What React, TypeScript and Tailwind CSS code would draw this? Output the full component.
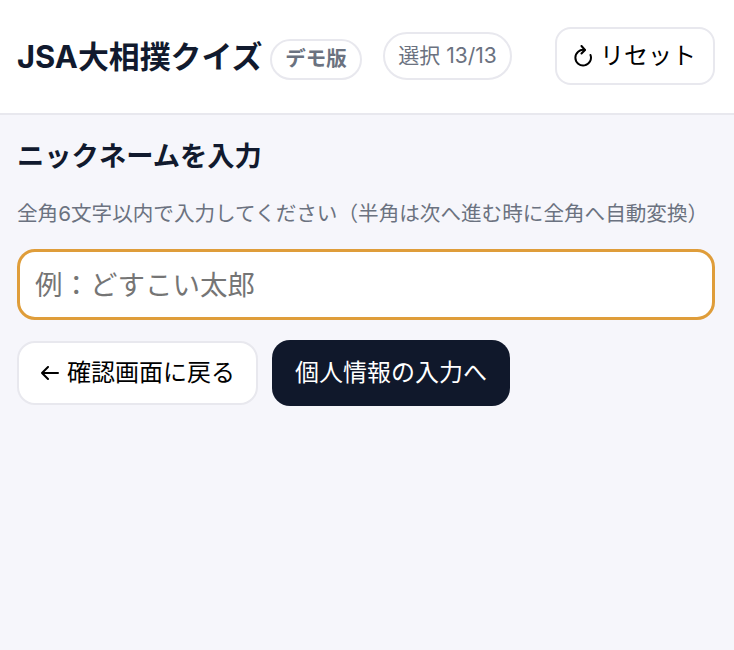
const App = () => {
  return (
    <div className="min-h-[650px] bg-[#f6f6fb] font-['Inter','Noto_Sans_CJK_JP',sans-serif]">
      <header className="flex h-[115px] items-center border-b-2 border-[#e8e8ee] bg-white pl-[17px] pr-[19px]">
        <div className="flex items-center gap-[8px]">
          <h1 className="text-[30.9px] leading-[36px] font-bold text-[#111a2e]">JSA大相撲クイズ</h1>
          <span className="mt-[5px] flex h-[41px] items-center rounded-full border-2 border-[#e8e8ee] px-[13px] text-[20.5px] font-bold text-[#6b7280]">デモ版</span>
        </div>
        <span className="-mt-[1px] ml-[21px] flex h-[48px] items-center rounded-full border-2 border-[#e8e8ee] px-[13.5px] text-[21px] text-[#6b7280]">選択 13/13</span>
        <button className="-mt-[2px] ml-auto flex h-[58px] items-center gap-[7px] rounded-[16px] border-2 border-[#e8e8ee] bg-white px-[17px] text-[24px] text-black">
          <svg width="19" height="22" viewBox="0 0 19 22" fill="none" stroke="currentColor" strokeWidth="2" strokeLinecap="round" strokeLinejoin="round">
            <path d="M10.5 5 A7.8 7.8 0 1 0 16.5 10" />
            <path d="M7.5 1 L11 5 L7.5 8.5" />
          </svg>
          リセット
        </button>
      </header>
      <main className="pl-[17px] pr-[19px]">
        <h2 className="mt-[22px] text-[27.3px] leading-[40px] font-bold text-[#111a2e]">ニックネームを入力</h2>
        <p className="mt-[22px] text-[20.6px] leading-[30px] whitespace-nowrap text-[#6b7280]">全角6文字以内で入力してください（半角は次へ進む時に全角へ自動変換）</p>
        <input
          readOnly
          placeholder="例：どすこい太郎"
          className="mt-[20px] block h-[71px] w-full rounded-[18px] border-[3px] border-[#df9d3a] bg-white px-[15px] text-[27.5px] text-black placeholder:text-[#757575]"
        />
        <div className="mt-[20px] flex items-center gap-[14px]">
          <button className="flex h-[64px] items-center gap-[8px] rounded-[18px] border-2 border-[#e8e8ee] bg-white pl-[22px] pr-[21px] text-[24px] text-black">
            <svg width="18" height="14" viewBox="0 0 18 14" fill="none" stroke="currentColor" strokeWidth="2" strokeLinecap="round" strokeLinejoin="round">
              <path d="M7 1 L1 7 L7 13 M1 7 H17" />
            </svg>
            確認画面に戻る
          </button>
          <button className="flex h-[66px] items-center rounded-[18px] bg-[#10182b] px-[23px] text-[24px] text-white">個人情報の入力へ</button>
        </div>
      </main>
    </div>
  );
};

export default App;
